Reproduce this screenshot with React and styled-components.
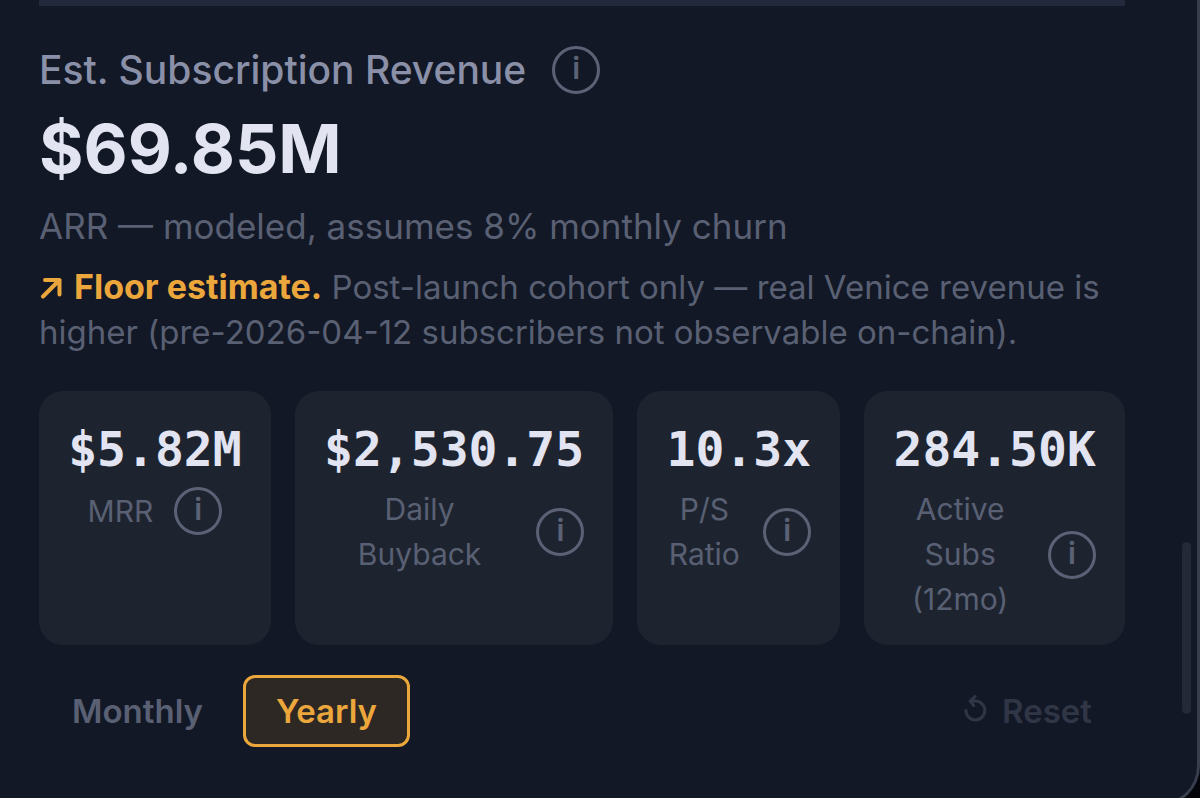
import React, { useState } from 'react';
import styled, { createGlobalStyle } from 'styled-components';

const GlobalStyle = createGlobalStyle`
*, *::before, *::after {
    box-sizing: border-box;
}
body {
    margin: 0;
    background: #03050b;
    font-family: Inter, "Liberation Sans", sans-serif;
}
`;

const Page = styled.div`
height: 100vh;
overflow: hidden;
position: relative;
`;

const Panel = styled.main`
min-height: calc(100vh + 8px);
padding: 0 72px 50px 39px;
background: #121825;
border-right: 3px solid #383e4d;
border-bottom: 3px solid #383e4d;
border-bottom-right-radius: 40px;
`;

const Divider = styled.hr`
height: 6px;
margin: 0;
border: 0;
background: #22293a;
`;

const TitleRow = styled.div`
display: flex;
align-items: center;
gap: 26px;
margin-top: 40px;
`;

const Title = styled.h2`
margin: 0;
font-size: 39px;
line-height: 48px;
font-weight: 500;
color: #8a90a8;
`;

const InfoButton = styled.button`
flex: none;
display: flex;
align-items: center;
justify-content: center;
width: 48px;
height: 48px;
padding: 0 0 4px;
border: 3px solid #5c6275;
border-radius: 50%;
background: none;
color: #5c6275;
font-family: inherit;
font-size: 30px;
line-height: 36px;
font-weight: 600;
cursor: pointer;
`;

const Total = styled.div`
margin-top: 12px;
font-size: 68px;
line-height: 84px;
font-weight: 700;
color: #e2e4f2;
`;

const Caption = styled.p`
margin: 12px 0 0;
font-size: 35px;
line-height: 48px;
color: #5a6073;
`;

const Note = styled.p`
margin: 14px 0 0;
font-size: 33px;
line-height: 45px;
color: #5a6073;

strong {
    font-size: 34px;
    font-weight: 700;
    color: #eba63c;
}
svg {
    margin-right: 11px;
}
`;

const Cards = styled.div`
display: flex;
gap: 24px;
margin-top: 36px;
`;

const Card = styled.section`
flex: 1 0 min-content;
padding: 24px 29px 23px;
border-radius: 24px;
background: #1d2430;
`;

const Value = styled.div`
margin-bottom: 4px;
font-family: "DejaVu Sans Mono", "Liberation Mono", monospace;
font-size: 48px;
line-height: 68px;
font-weight: 700;
text-align: center;
white-space: nowrap;
color: #e2e4f2;
`;

const LabelRow = styled.div`
display: flex;
align-items: center;
justify-content: center;
gap: 21px;
`;

const Label = styled.span`
font-size: 30px;
line-height: 45px;
text-align: center;
color: #5a6073;
`;

const Toolbar = styled.div`
display: flex;
gap: 7px;
margin-top: 30px;
`;

const PeriodButton = styled.button`
height: 72px;
padding: 0 30px;
border: 3px solid ${({ $active }) => ($active ? '#eba63c' : 'transparent')};
border-radius: 12px;
background: ${({ $active }) => ($active ? '#2d2824' : 'transparent')};
color: ${({ $active }) => ($active ? '#eba63c' : '#5a6073')};
font-family: inherit;
font-size: 33px;
line-height: 45px;
font-weight: 600;
cursor: pointer;
`;

const ResetButton = styled(PeriodButton)`
display: flex;
align-items: center;
gap: 14px;
margin-left: auto;
color: #303646;
`;

const ScrollThumb = styled.div`
position: absolute;
top: 542px;
right: 9px;
width: 9px;
height: 172px;
border-radius: 5px;
background: #232937;
`;

const metrics = [
    { value: '$5.82M', label: 'MRR' },
    { value: '$2,530.75', label: 'Daily Buyback' },
    { value: '10.3x', label: 'P/S Ratio' },
    { value: '284.50K', label: 'Active Subs (12mo)' },
];

const Info = ({ about }) => (
    <InfoButton type="button" aria-label={`About ${about}`}>i</InfoButton>
);

const ArrowIcon = () => (
    <svg width="24" height="22" viewBox="0 0 24 22" fill="none" stroke="currentColor" strokeWidth="4" strokeLinecap="round" strokeLinejoin="round" aria-hidden="true">
        <path d="M4 19.5 20.5 3M6 3h14.5v14.5" />
    </svg>
);

const ResetIcon = () => (
    <svg width="24" height="32" viewBox="0 0 24 32" fill="none" stroke="currentColor" strokeWidth="3" strokeLinecap="round" strokeLinejoin="round" aria-hidden="true">
        <path d="M2 15.5a9.4 9.4 0 1 0 9.4-9.4H6.5M11 1.5 6.2 6.1l3.4 4.4" />
    </svg>
);

const App = () => {
    const [period, setPeriod] = useState('Yearly');

    return (
        <Page>
            <GlobalStyle />
            <Panel>
                <Divider />
                <TitleRow>
                    <Title>Est. Subscription Revenue</Title>
                    <Info about="subscription revenue" />
                </TitleRow>
                <Total>$69.85M</Total>
                <Caption>ARR — modeled, assumes 8% monthly churn</Caption>
                <Note>
                    <strong><ArrowIcon />Floor estimate.</strong> Post-launch cohort only — real Venice revenue is
                    higher (pre-2026-04-12 subscribers not observable on-chain).
                </Note>
                <Cards>
                    {metrics.map((item) => (
                        <Card key={item.label}>
                            <Value>{item.value}</Value>
                            <LabelRow>
                                <Label>{item.label}</Label>
                                <Info about={item.label} />
                            </LabelRow>
                        </Card>
                    ))}
                </Cards>
                <Toolbar>
                    {['Monthly', 'Yearly'].map((name) => (
                        <PeriodButton
                            key={name}
                            type="button"
                            $active={period === name}
                            aria-pressed={period === name}
                            onClick={() => setPeriod(name)}
                        >
                            {name}
                        </PeriodButton>
                    ))}
                    <ResetButton type="button" onClick={() => setPeriod('Yearly')}>
                        <ResetIcon />
                        Reset
                    </ResetButton>
                </Toolbar>
            </Panel>
            <ScrollThumb />
        </Page>
    );
}

export default App;
